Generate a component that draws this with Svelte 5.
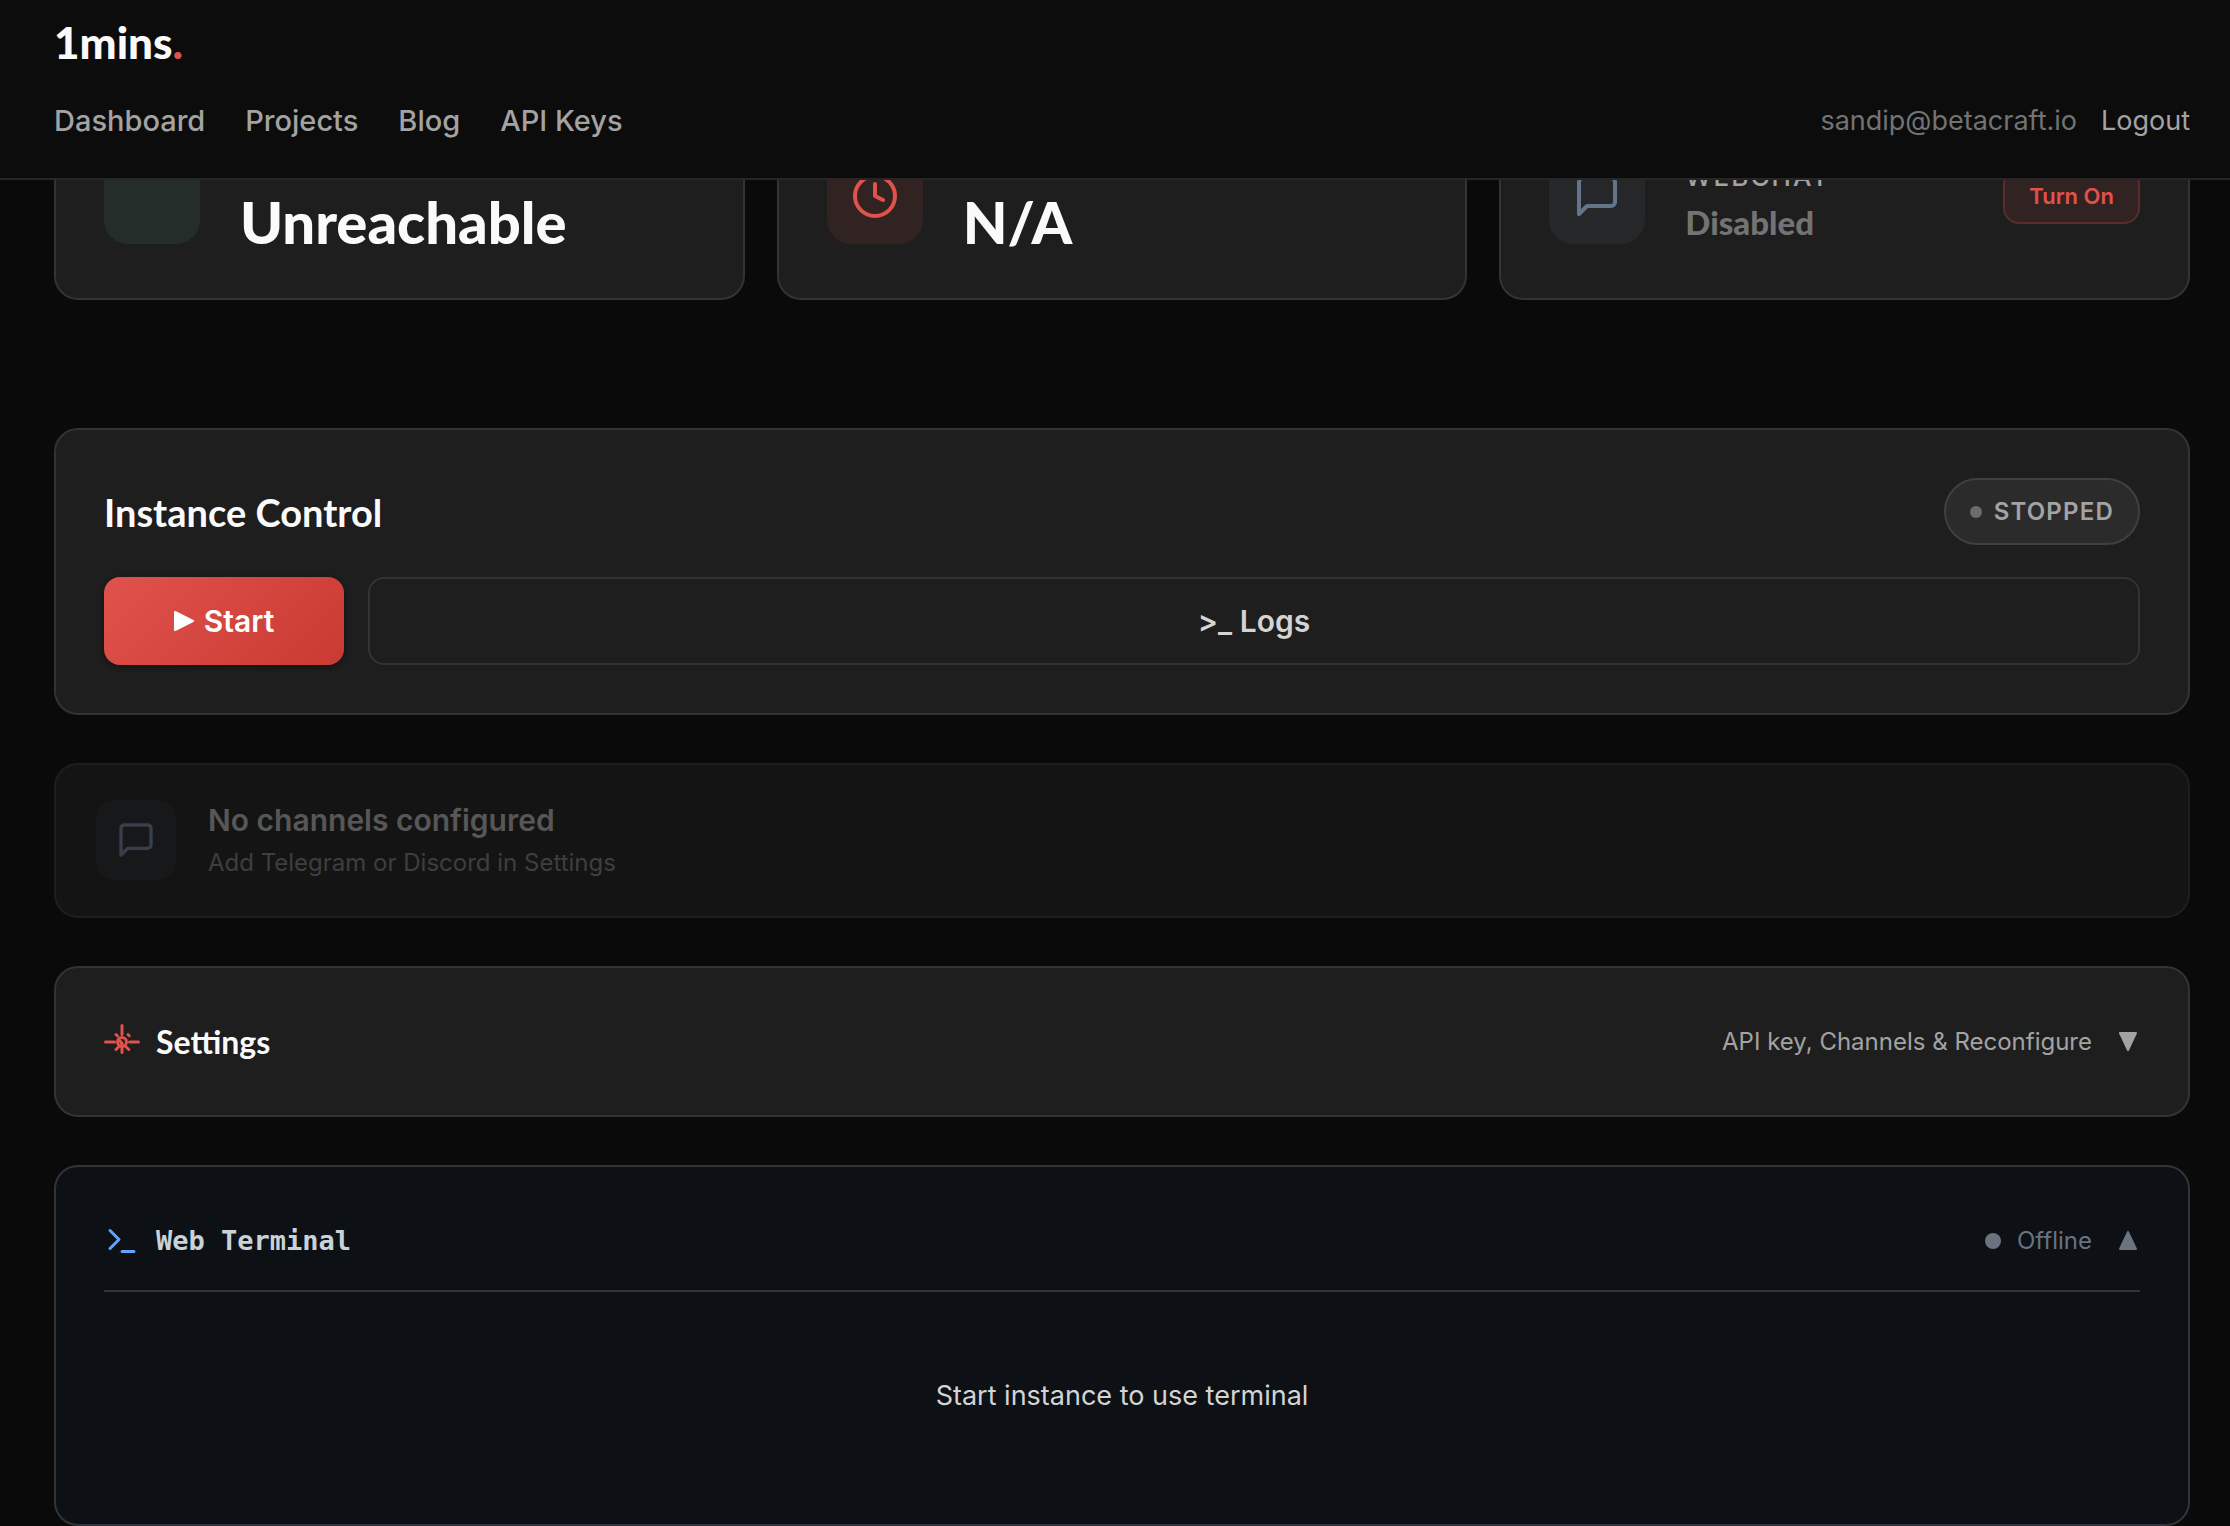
<script lang="ts">
	type Card = {
		kind: 'health' | 'uptime';
		label: string;
		value: string;
	};

	const nav = ['Dashboard', 'Projects', 'Blog', 'API Keys'];

	const cards: Card[] = [
		{ kind: 'health', label: 'Health', value: 'Unreachable' },
		{ kind: 'uptime', label: 'Uptime', value: 'N/A' }
	];

	let settingsOpen = $state(false);
	let terminalOpen = $state(true);
</script>

<svelte:head><title>Dashboard · 1mins</title></svelte:head>

{#snippet chatIcon()}
	<svg viewBox="0 0 24 24" aria-hidden="true">
		<path d="M21 15a2 2 0 0 1-2 2H7l-4 4V5a2 2 0 0 1 2-2h14a2 2 0 0 1 2 2z" />
	</svg>
{/snippet}

{#snippet caret(open: boolean)}
	<svg class="caret" viewBox="0 0 22 22" aria-hidden="true">
		<path d={open ? 'M2 19h16L10 2z' : 'M2 2h16l-8 17z'} />
	</svg>
{/snippet}

<header class="topbar">
	<a class="logo" href="/">1mins<span>.</span></a>
	<div class="topbar-row">
		<nav>
			{#each nav as item}
				<a href="#{item.toLowerCase().replace(' ', '-')}">{item}</a>
			{/each}
		</nav>
		<div class="account">
			<span class="email">sandip@betacraft.io</span>
			<button class="logout">Logout</button>
		</div>
	</div>
</header>

<main>
	<section class="stats">
		{#each cards as card}
			<div class="card stat">
				<div class="stat-icon {card.kind}">
					{#if card.kind === 'uptime'}
						<svg viewBox="0 0 24 24" aria-hidden="true">
							<circle cx="12" cy="12" r="10" />
							<path d="M12 6v6l4 2" />
						</svg>
					{/if}
				</div>
				<div class="stat-body">
					<span class="stat-label">{card.label}</span>
					<span class="stat-value">{card.value}</span>
				</div>
			</div>
		{/each}
		<div class="card stat">
			<div class="stat-icon webchat">{@render chatIcon()}</div>
			<div class="stat-body">
				<span class="stat-label">Webchat</span>
				<span class="stat-state">Disabled</span>
			</div>
			<button class="turn-on">Turn On</button>
		</div>
	</section>

	<section class="card control">
		<div class="row">
			<h2>Instance Control</h2>
			<span class="badge"><i></i>Stopped</span>
		</div>
		<div class="actions">
			<button class="btn primary">
				<svg viewBox="1 1 18 18" aria-hidden="true">
					<path d="M2 2l16 8-16 8z" />
				</svg>
				Start
			</button>
			<button class="btn">&gt;_ Logs</button>
		</div>
	</section>

	<section class="card channels">
		<div class="channel-icon">{@render chatIcon()}</div>
		<div class="channel-text">
			<h3>No channels configured</h3>
			<p>Add Telegram or Discord in Settings</p>
		</div>
	</section>

	<section class="card">
		<button class="row toggle" onclick={() => (settingsOpen = !settingsOpen)}>
			<span class="toggle-title">
				<svg class="gear" viewBox="0 0 24 24" aria-hidden="true">
					<circle cx="12" cy="12" r="3" />
					<path d="M12 1v6M12 13v6M1 12h6M17 12h6" />
					<path d="M8 7l1 1M16 7l.8.8M10 15l-2 2M14.5 15l2 2M10.5 11l1.5 2" />
				</svg>
				Settings
			</span>
			<span class="toggle-meta">API key, Channels &amp; Reconfigure {@render caret(settingsOpen)}</span>
		</button>
	</section>

	<section class="card terminal">
		<button class="row toggle" onclick={() => (terminalOpen = !terminalOpen)}>
			<span class="toggle-title mono">
				<svg class="prompt" viewBox="0 0 24 24" aria-hidden="true">
					<path d="M4 17l6-6-6-6M12 19h8" />
				</svg>
				Web Terminal
			</span>
			<span class="toggle-meta"><span class="offline"><i></i>Offline</span> {@render caret(terminalOpen)}</span>
		</button>
		{#if terminalOpen}
			<div class="terminal-body">Start instance to use terminal</div>
		{/if}
	</section>
</main>

<style>
	:global(body) {
		background: #0a0a0a;
		color: #fafafa;
		font-family: Inter, sans-serif;
	}

	button {
		font: inherit;
		color: inherit;
		background: none;
		border: 0;
		padding: 0;
		cursor: pointer;
	}

	a {
		color: inherit;
		text-decoration: none;
	}

	h2,
	h3,
	p {
		margin: 0;
	}

	svg {
		flex-shrink: 0;
		fill: none;
		stroke: currentColor;
		stroke-width: 2;
		stroke-linecap: round;
		stroke-linejoin: round;
	}

	/* top bar stays over the page while it scrolls */
	.topbar {
		position: fixed;
		inset: 0 0 auto;
		z-index: 10;
		box-sizing: border-box;
		height: 180px;
		padding: 10px 40px 0 54px;
		background: #0c0c0c;
		border-bottom: 2px solid #262626;
	}

	.logo {
		display: block;
		font-family: Lato, sans-serif;
		font-size: 44px;
		font-weight: 900;
		line-height: 64px;
	}

	.logo span {
		color: #e0524c;
	}

	.topbar-row,
	nav,
	.account {
		display: flex;
		align-items: center;
	}

	.topbar-row {
		justify-content: space-between;
		padding-top: 24px;
	}

	nav {
		gap: 40px;
		font-size: 29px;
		font-weight: 500;
		line-height: 44px;
		color: #a3a3a3;
	}

	.account {
		gap: 24px;
		font-size: 27px;
		line-height: 46px;
	}

	.email {
		color: #737373;
	}

	.logout {
		color: #a3a3a3;
	}

	main {
		display: flex;
		flex-direction: column;
		gap: 48px;
		padding: 92px 40px 0 54px;
	}

	.card {
		padding: 48px;
		background: #1e1e1e;
		border: 2px solid #333;
		border-radius: 24px;
	}

	.stats {
		display: grid;
		grid-template-columns: repeat(3, 1fr);
		gap: 32px;
		margin-bottom: 80px;
	}

	.stat {
		display: flex;
		align-items: center;
		gap: 40px;
	}

	.stat-icon {
		display: grid;
		place-items: center;
		width: 96px;
		height: 96px;
		border-radius: 24px;
	}

	.stat-icon svg {
		width: 48px;
		height: 48px;
	}

	.health {
		background: #242d29;
	}

	.uptime {
		background: #322323;
		color: #e0524c;
	}

	.webchat {
		background: #252729;
		color: #64748b;
	}

	.stat-body {
		display: flex;
		flex: 1;
		flex-direction: column;
		gap: 12px;
	}

	.stat-label {
		font-size: 26px;
		font-weight: 500;
		line-height: 40px;
		letter-spacing: 0.08em;
		text-transform: uppercase;
		color: #a3a3a3;
	}

	.stat-value {
		font-family: Lato, sans-serif;
		font-size: 58px;
		font-weight: 900;
		line-height: 56px;
	}

	.stat-state {
		font-family: Lato, sans-serif;
		font-size: 33px;
		font-weight: 900;
		line-height: 26px;
		color: #737373;
	}

	.turn-on {
		padding: 10px 24px;
		font-size: 22px;
		font-weight: 600;
		line-height: 32px;
		color: #e0524c;
		background: #322323;
		border: 2px solid #582d2b;
		border-radius: 16px;
	}

	.row {
		display: flex;
		align-items: center;
		justify-content: space-between;
	}

	.control {
		display: flex;
		flex-direction: column;
		gap: 32px;
	}

	h2 {
		font-family: Lato, sans-serif;
		font-size: 38px;
		font-weight: 700;
		line-height: 64px;
	}

	.badge {
		display: flex;
		align-items: center;
		gap: 12px;
		padding: 16px 24px;
		font-size: 24px;
		font-weight: 600;
		line-height: 31px;
		letter-spacing: 0.05em;
		text-transform: uppercase;
		color: #a3a3a3;
		background: #2b2b2b;
		border: 2px solid #404040;
		border-radius: 40px;
	}

	.badge i {
		width: 12px;
		height: 12px;
		border-radius: 50%;
		background: #6b6b6b;
	}

	.actions {
		display: grid;
		grid-template-columns: 240px 1fr;
		gap: 24px;
	}

	.btn {
		display: flex;
		align-items: center;
		justify-content: center;
		gap: 10px;
		padding: 20px;
		font-size: 30px;
		font-weight: 600;
		line-height: 44px;
		color: #d4d4d4;
		border: 2px solid #333;
		border-radius: 16px;
	}

	.btn svg {
		width: 20px;
		height: 20px;
		fill: currentColor;
	}

	.primary {
		padding: 22px;
		color: #fff;
		background: linear-gradient(135deg, #e0524c, #c93a32);
		border: 0;
		box-shadow: 0 2px 6px rgba(0, 0, 0, 0.4);
	}

	.channels {
		display: flex;
		align-items: center;
		gap: 32px;
		padding: 35px 40px 36px;
		opacity: 0.5;
	}

	.channel-icon {
		display: grid;
		place-items: center;
		width: 80px;
		height: 80px;
		border-radius: 20px;
		background: #252729;
		color: #64748b;
	}

	.channel-icon svg {
		width: 40px;
		height: 40px;
	}

	.channel-text {
		display: grid;
		gap: 6px;
	}

	h3 {
		font-size: 30px;
		font-weight: 600;
		line-height: 40px;
		color: #a3a3a3;
	}

	p {
		font-size: 24px;
		line-height: 34px;
		color: #737373;
	}

	.toggle {
		width: 100%;
		line-height: 51px;
	}

	.toggle-title {
		display: flex;
		align-items: center;
		gap: 16px;
		font-family: Lato, sans-serif;
		font-size: 32px;
		font-weight: 700;
	}

	.gear {
		width: 36px;
		height: 36px;
		color: #e0524c;
	}

	.toggle-meta {
		display: flex;
		align-items: center;
		gap: 26px;
		font-size: 24px;
		color: #a3a3a3;
	}

	.caret {
		width: 22px;
		height: 22px;
		fill: currentColor;
	}

	.terminal {
		background: #0d1116;
		border-color: #30343b;
	}

	.mono {
		font-family: 'DejaVu Sans Mono', monospace;
		font-size: 27px;
		color: #c9d1d9;
	}

	.prompt {
		width: 36px;
		height: 36px;
		color: #60a5fa;
	}

	.terminal .toggle-meta {
		color: #6b7280;
	}

	.offline {
		display: flex;
		align-items: center;
		gap: 16px;
	}

	.offline i {
		width: 16px;
		height: 16px;
		border-radius: 50%;
		background: currentColor;
	}

	.terminal-body {
		margin-top: 24px;
		padding: 82px 0 58px;
		border-top: 2px solid #30343b;
		font-size: 27px;
		line-height: 44px;
		text-align: center;
		color: #d4d4d4;
	}
</style>
